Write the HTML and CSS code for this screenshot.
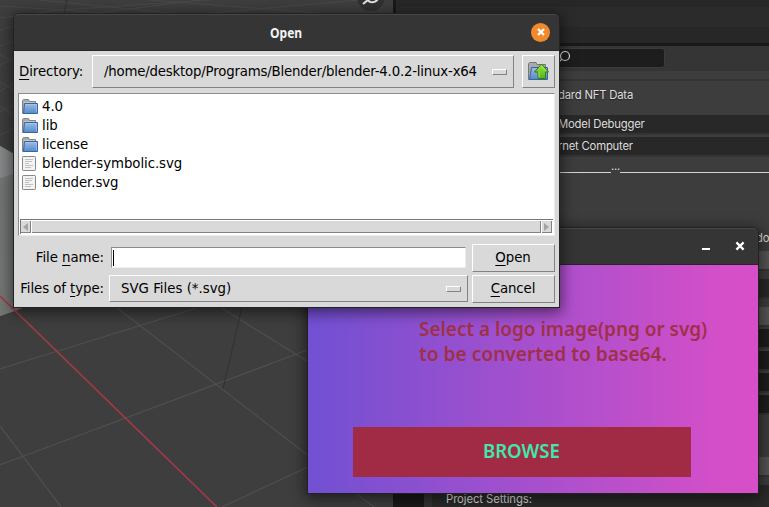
FILE: index.html
```html
<!DOCTYPE html>
<html lang="en">
<head>
<meta charset="utf-8">
<title>Open</title>
<link rel="stylesheet" href="styles.css">
</head>
<body>
<svg width="0" height="0" class="defs">
  <defs>
    <linearGradient id="blue" x1="0" y1="0" x2="0" y2="1"><stop offset="0" stop-color="#9bbde4"/><stop offset="1" stop-color="#5689c8"/></linearGradient>
    <linearGradient id="green" x1="0" y1="0" x2="0" y2="1"><stop offset="0" stop-color="#9be64c"/><stop offset="1" stop-color="#51b60b"/></linearGradient>
    <symbol id="folder" viewBox="0 0 16 16">
      <path d="M.5 14.5V1.5L1.5.5H6.5L7.5 2.5H13.5V14.5Z" fill="#aaa" stroke="#858585"/>
      <path d="M2 3.5H13" stroke="#c4c4c4"/>
      <path d="M2.5 4.5H15.5V14.5H1.5Z" fill="url(#blue)" stroke="#3465a4"/>
      <path d="M3.3 5.5H14.5V13.5" fill="none" stroke="#a9c8ec" stroke-width=".7"/>
    </symbol>
    <symbol id="file" viewBox="0 0 14 15">
      <rect x=".5" y=".5" width="13" height="14" rx=".7" fill="#f3f3f3" stroke="#888"/>
      <path d="M3 3.5h8M3 5.5h7M3 7.5h4M3 9.5h8M3 11.5h6" stroke="#c0c0c0"/>
    </symbol>
  </defs>
</svg>
<div class="desktop">
  <svg class="viewport" width="393" height="507" viewBox="0 0 393 507">
    <defs><linearGradient id="cube" x1="0" y1="0" x2="0" y2="1"><stop offset="0" stop-color="#7c7e7e"/><stop offset=".25" stop-color="#717473"/><stop offset="1" stop-color="#747776"/></linearGradient></defs>
    <rect width="393" height="507" fill="#3e3e3e"/>
    <g stroke="#494949" fill="none">
      <path d="M0 6L120 14M0 18L60 10L210 0M40 0L180 14M150 0L330 14M200 14L360 0M90 14L200 0M0 30L14 26M0 46L14 41M0 65L14 58M0 91L14 83M0 112L14 105M0 135L14 128M0 55L14 61M0 82L14 90M0 106L14 116"/>
    </g>
    <path d="M0 146L14 154V311L0 316Z" fill="url(#cube)"/>
    <path d="M0 316V304L14 306H29Z" fill="#747776"/>
    <path d="M0 146L14 154V174L0 178Z" fill="#858788"/>
    <g stroke="#4e4e4e" stroke-width="1.3" fill="none">
      <path d="M0 369L200 307M0 465L310 349M222 507L310 466M116 307L310 457M220 307L310 363M0 426L61 507M355 493L374 507"/>
    </g>
    <path d="M242 307L223 389M67 0L64 14" stroke="#2d2d2d" stroke-width=".8"/>
    <path d="M0 296L217 507" stroke="#a23948" stroke-width="1.7"/>
    <circle cx="371" cy="-3" r="14" fill="#303030"/>
    <path d="M363 4L368 0" fill="none" stroke="#ddd" stroke-width="2.2"/>
    <path d="M367 -2C369 4 375 3 378 -1" fill="none" stroke="#ddd" stroke-width="2"/>
  </svg>
  <div class="panel">
    <div class="strip s1"></div><div class="strip s2"></div><div class="strip s3"></div>
    <div class="toolbar"><div class="search"><svg width="14" height="14" viewBox="0 0 14 14"><circle cx="8" cy="6" r="4.5"/><path d="M4.8 9.2L1.5 12.5"/></svg></div></div>
    <div class="label first">dard NFT Data</div>
    <div class="label field">Model Debugger</div>
    <div class="label field">rnet Computer</div>
    <div class="rule"><i></i><span>...</span><i class="grow"></i></div>
    <div class="side">
      <div class="cut">do</div>
      <b class="lite"></b><b></b><b class="lite"></b>
      <div class="stack"><b></b><b></b><b></b><b></b></div>
      <b class="lite last"></b>
    </div>
    <div class="foot"><em></em><em class="gap"></em><span>Project Settings:</span></div>
  </div>

  <section class="window app">
    <header><span class="min"></span><svg width="10" height="10" viewBox="0 0 10 10"><path d="M1.4 1.4L8.6 8.6M8.6 1.4L1.4 8.6" stroke="#fff" stroke-width="2.2"/></svg></header>
    <div class="canvas">
      <p><span class="l1">Select a logo image(png or svg)</span><br><span class="l2">to be converted to base64.</span></p>
      <div class="browse"><span>BROWSE</span></div>
    </div>
  </section>

  <section class="window dialog">
    <header><span class="title">Open</span><span class="close"><svg width="8" height="8" viewBox="0 0 8 8"><path d="M1 1L7 7M7 1L1 7" stroke="#fff" stroke-width="2.2"/></svg></span></header>
    <div class="body">
      <div class="row dir">
        <label><u>D</u>irectory:</label>
        <div class="raised combo"><span class="path">/home/desktop/Programs/Blender/blender-4.0.2-linux-x64</span><i class="mark"></i></div>
        <div class="raised up"><svg width="22" height="20" viewBox="0 0 22 20">
          <path d="M.5 17.5V1.5L1.5.5H8L9 2.5H17.5V17.5Z" fill="#aaa" stroke="#777"/>
          <path d="M3.5 5.5H19.5V17.5H1.5Z" fill="url(#blue)" stroke="#3465a4"/>
          <path d="M13.5 2L20.5 10H17.5V16.5H10V10H6.5Z" fill="url(#green)" stroke="#3a7a06"/>
          <path d="M13.5 3.8L18 9M11 10V15.5" stroke="#b6f07a" fill="none" stroke-width=".8"/></svg></div>
      </div>
      <div class="list">
        <ul>
          <li><svg class="fo"><use href="#folder"/></svg><span>4.0</span></li>
          <li><svg class="fo"><use href="#folder"/></svg><span>lib</span></li>
          <li><svg class="fo"><use href="#folder"/></svg><span>license</span></li>
          <li><svg class="fi"><use href="#file"/></svg><span>blender-symbolic.svg</span></li>
          <li><svg class="fi"><use href="#file"/></svg><span>blender.svg</span></li>
        </ul>
        <div class="scroll">
          <div class="arrow"><svg width="5" height="8"><path d="M5 0V8L0 4Z" fill="#a3a3a3"/></svg></div>
          <div class="thumb"></div>
          <div class="arrow"><svg width="5" height="8"><path d="M0 0V8L5 4Z" fill="#a3a3a3"/></svg></div>
        </div>
      </div>
      <div class="row name">
        <label>File <u>n</u>ame:</label>
        <div class="entry"><i></i></div>
        <div class="raised btn"><span><u>O</u>pen</span></div>
      </div>
      <div class="row type">
        <label>Files of <u>t</u>ype:</label>
        <div class="raised combo"><span>SVG Files (*.svg)</span><i class="mark"></i></div>
        <div class="raised btn"><span><u>C</u>ancel</span></div>
      </div>
    </div>
  </section>
</div>
</body>
</html>
```
FILE: styles.css
```css
* { box-sizing: border-box; }
body { margin: 0; overflow: hidden; background: #3d3d3d; font-family: "DejaVu Sans", sans-serif; }
.defs { position: absolute; }
.desktop { position: relative; width: 769px; height: 507px; overflow: hidden; display: flex; }
.viewport { flex: none; display: block; }
.panel { flex: none; width: 376px; height: 507px; border-left: 3px solid #191919; background: #3d3d3d; display: flex; flex-direction: column; color: #dedede; font: 11.3px/18px Inter, sans-serif; letter-spacing: -.2px; }
.panel > * { flex: none; }
.strip { background: #2a2a2a; }
.s1 { height: 7px; background: #272727; }
.s2 { height: 20px; background: #2b2b2b; }
.s3 { height: 19px; background: #272727; border-bottom: 3px solid #191919; }
.toolbar { height: 25px; background: #353535; padding: 2px 0 0 100px; }
.search { width: 169px; height: 20px; background: #1d1d1d; border: 1px solid #3b3b3b; border-radius: 3px; padding: 1px 0 0 60px; }
.search svg { display: block; fill: none; stroke: #ddd; stroke-width: 1.2; }
.label { white-space: nowrap; padding-left: 162px; height: 18px; text-shadow: 0 1px 1px #222; }
.label.first { margin-top: 8px; border-top: 2px solid #343434; height: 36px; padding-top: 5px; }
.label.field { background: #282828; margin-bottom: 4px; box-shadow: 0 2px #343434; line-height: 19px; }
.rule { display: flex; align-items: flex-end; height: 14px; line-height: 14px; }
.rule i { width: 215px; border-bottom: 1px solid #d4d4d4; }
.rule span { width: 9px; line-height: 12px; padding-bottom: 1px; }
.rule .grow { flex: 1; width: auto; }
.side { margin: 56px 0 0 362px; width: 11px; display: flex; flex-direction: column; gap: 10px; }
.side .cut { height: 12px; line-height: 19px; margin-left: -2px; width: 13px; }
.side b { display: block; flex: none; height: 18px; background: #282828; box-shadow: 0 2px #343434; }
.side .lite { background: #545454; }
.stack { display: flex; flex-direction: column; gap: 4px; margin-top: -6px; }
.side .stack b { background: #1d1d1d; }
.side .last { margin-top: 34px; }
.foot { margin-top: 10px; height: 22px; background: #2a2a2a; display: flex; align-items: flex-end; line-height: 15px; letter-spacing: -.08px; }
.foot em { width: 28px; height: 22px; background: #191919; }
.foot .gap { width: 8px; background: #333; }
.foot span { margin-left: 14px; }

.window { position: absolute; border-radius: 5px 5px 0 0; box-shadow: 0 0 0 1px #222, 0 3px 14px 3px rgba(0,0,0,.5); }
.window header { height: 37px; background: #353535; border-top: 1px solid #474747; border-bottom: 1px solid #262626; border-radius: 5px 5px 0 0; display: flex; align-items: center; }
.app { left: 308px; top: 228px; width: 450px; height: 265px; }
.app header { justify-content: flex-end; gap: 25px; padding: 0 13px 2px 0; }
.min { width: 8px; height: 2px; background: #fff; margin-top: 7px; }
.canvas { height: 228px; background: linear-gradient(90deg, #7450d2 3%, #d64fc8 94%); padding-top: 51px; }
.canvas p { margin: 0 0 0 111px; height: 51px; color: #9f304a; font: 600 20px/25px "Noto Sans", sans-serif; white-space: nowrap; }
.canvas span { display: inline-block; transform-origin: left; }
.l1 { transform: scaleX(.946); }
.l2 { transform: scaleX(.957); }
.browse { margin: 60px 0 0 45px; width: 338px; height: 50px; background: #a12a44; color: #40e8ad; display: flex; justify-content: center; align-items: center; font: 600 20px/24px "Noto Sans", sans-serif; padding: 0 2px 2px 0; }
.browse span { transform: scaleX(.93); transform-origin: center; }

.dialog { left: 14px; top: 14px; width: 545px; height: 293px; color: #000; font-size: 13.33px; }
.dialog header { padding: 0 9px 1px 256px; justify-content: space-between; }
.title { color: #f3f3f3; font: bold 14px "Noto Sans", sans-serif; transform: scaleX(.86); transform-origin: left; }
.close { width: 19px; height: 19px; border-radius: 50%; background: #f08a2c; display: flex; align-items: center; justify-content: center; }
.body { height: 256px; background: #d9d9d9; padding: 4px 4px 0; line-height: 18px; white-space: nowrap; letter-spacing: -.07px; }
.row { display: flex; }
.row label { flex: none; }
.row u { text-underline-offset: 3px; text-decoration-thickness: 1px; text-decoration-skip-ink: none; }
.raised { border: 1px solid; border-color: #fff #828282 #828282 #fff; display: flex; align-items: center; }
.dir { height: 38px; }
.dir label { width: 74px; padding: 8px 0 0 1px; }
.dir .combo { width: 422px; height: 33px; }
.path { letter-spacing: -.2px; }
.combo { justify-content: space-between; padding: 0 6px 0 11px; }
.mark { width: 15px; height: 6px; border: 1px solid; border-color: #fff #828282 #828282 #fff; }
.up { margin-left: 8px; width: 33px; height: 33px; padding-left: 5px; }
.list { width: 537px; height: 143px; background: #fff; border: 1px solid; border-color: #8c8c8c #ededed #ededed #8c8c8c; padding: 3px 1px 1px; display: flex; flex-direction: column; justify-content: space-between; }
ul { list-style: none; margin: 0; padding: 0 0 0 2px; }
li { height: 19px; display: flex; align-items: center; }
li svg { flex: none; width: 16px; height: 16px; margin-right: 4px; }
li .fi { width: 14px; height: 15px; margin-right: 6px; }
.scroll { height: 15px; border-top: 1px solid #777; border-left: 1px solid #777; display: flex; gap: 1px; padding: 1px 1px 0 0; }
.arrow, .thumb { height: 12px; background: #d9d9d9; border-right: 1px solid #828282; border-bottom: 1px solid #828282; }
.arrow { width: 10px; display: flex; align-items: center; justify-content: center; }
.thumb { flex: 1; }
.name { margin-top: 8px; height: 31px; }
.name label, .type label { width: 86px; text-align: right; padding-top: 5px; }
.type .combo span { letter-spacing: 0; }
.entry { margin: 3px 6px 0 7px; width: 355px; height: 21px; background: #fff; border: 1px solid; border-color: #8c8c8c #ededed #ededed #8c8c8c; padding: 2px 1px; }
.entry i { display: block; width: 1px; height: 16px; background: #000; }
.btn { width: 83px; height: 28px; justify-content: center; padding-right: 1px; }
.type .combo { margin: 0 4px 0 5px; width: 359px; height: 27px; }
```
